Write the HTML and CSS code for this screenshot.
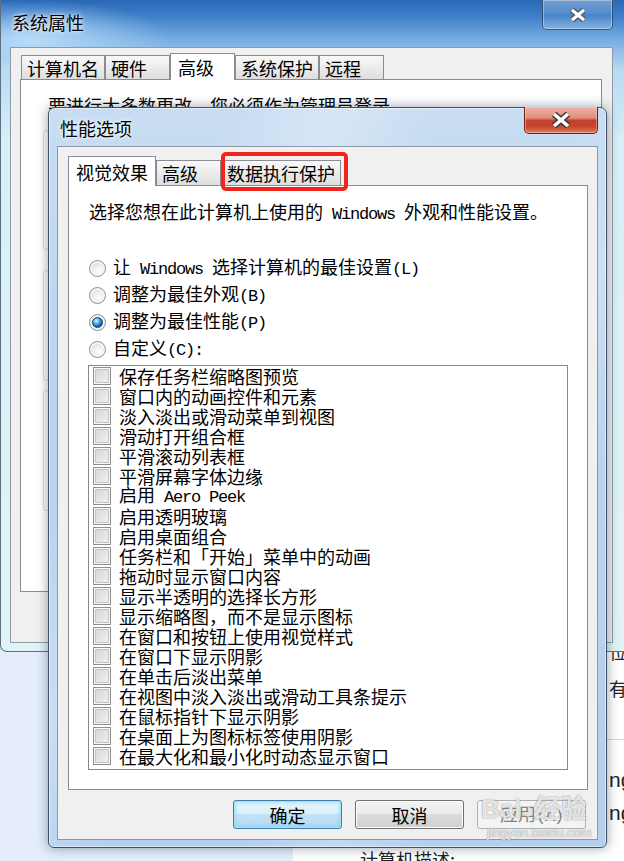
FILE: index.html
```html
<!DOCTYPE html>
<html lang="zh-CN">
<head>
  <meta charset="UTF-8">
  <meta name="viewport" content="width=device-width, initial-scale=1.0">
  <title>性能选项</title>
  <link rel="stylesheet" href="styles.css">
</head>
<body>

  <!-- Web page lying behind the windows -->
  <div class="page">
    <div class="page-line edge">位</div>
    <div class="page-line edge gap1">有可</div>
    <div class="page-rule"></div>
    <div class="page-line edge en gap2">ng</div>
    <div class="page-line edge en gap3">ng</div>
    <div class="page-line desc">计算机描述:</div>
  </div>

  <!-- System properties window (behind) -->
  <div class="window sys">
    <div class="titlebar">
      <span class="title">系统属性</span>
      <div class="close">
        <svg width="22" height="16" viewBox="0 0 22 16">
          <path d="M5 3 L17 13 M17 3 L5 13" stroke="#4a5562" stroke-width="6"/>
          <path d="M5 3 L17 13 M17 3 L5 13" stroke="#fff" stroke-width="3.4"/>
        </svg>
      </div>
    </div>
    <div class="client">
      <div class="tabs">
        <div class="tab">计算机名</div>
        <div class="tab">硬件</div>
        <div class="tab on">高级</div>
        <div class="tab">系统保护</div>
        <div class="tab">远程</div>
      </div>
      <div class="panel sys-panel">
        <p class="note">要进行大多数更改，您必须作为管理员登录。</p>
        <div class="group g1"></div>
        <div class="group g2"></div>
        <div class="group g3"></div>
      </div>
      <div class="sys-foot"></div>
    </div>
  </div>

  <!-- Performance options dialog (front) -->
  <div class="window perf">
    <div class="titlebar">
      <span class="title">性能选项</span>
      <div class="close red">
        <svg width="22" height="16" viewBox="0 0 22 16">
          <path d="M4 2 L18 14 M18 2 L4 14" stroke="#3a3a3a" stroke-width="6.4"/>
          <path d="M4 2 L18 14 M18 2 L4 14" stroke="#fff" stroke-width="3.6"/>
        </svg>
      </div>
    </div>
    <div class="client">
      <div class="tabs">
        <div class="tab on">视觉效果</div>
        <div class="tab">高级</div>
        <div class="tab marked">数据执行保护</div>
      </div>
      <div class="panel">
        <p class="intro">选择您想在此计算机上使用的<span class="lat"> Windows </span>外观和性能设置。</p>

        <div class="radios">
          <label class="radio"><span class="dot"></span><span>让<span class="lat"> Windows </span>选择计算机的最佳设置<span class="lat">(L)</span></span></label>
          <label class="radio"><span class="dot"></span><span>调整为最佳外观<span class="lat">(B)</span></span></label>
          <label class="radio"><span class="dot on"></span><span>调整为最佳性能<span class="lat">(P)</span></span></label>
          <label class="radio"><span class="dot"></span><span>自定义<span class="lat">(C):</span></span></label>
        </div>

        <ul class="list">
          <li><span class="box"></span><span>保存任务栏缩略图预览</span></li>
          <li><span class="box"></span><span>窗口内的动画控件和元素</span></li>
          <li><span class="box"></span><span>淡入淡出或滑动菜单到视图</span></li>
          <li><span class="box"></span><span>滑动打开组合框</span></li>
          <li><span class="box"></span><span>平滑滚动列表框</span></li>
          <li><span class="box"></span><span>平滑屏幕字体边缘</span></li>
          <li><span class="box"></span><span>启用<span class="lat"> Aero Peek</span></span></li>
          <li><span class="box"></span><span>启用透明玻璃</span></li>
          <li><span class="box"></span><span>启用桌面组合</span></li>
          <li><span class="box"></span><span>任务栏和「开始」菜单中的动画</span></li>
          <li><span class="box"></span><span>拖动时显示窗口内容</span></li>
          <li><span class="box"></span><span>显示半透明的选择长方形</span></li>
          <li><span class="box"></span><span>显示缩略图，而不是显示图标</span></li>
          <li><span class="box"></span><span>在窗口和按钮上使用视觉样式</span></li>
          <li><span class="box"></span><span>在窗口下显示阴影</span></li>
          <li><span class="box"></span><span>在单击后淡出菜单</span></li>
          <li><span class="box"></span><span>在视图中淡入淡出或滑动工具条提示</span></li>
          <li><span class="box"></span><span>在鼠标指针下显示阴影</span></li>
          <li><span class="box"></span><span>在桌面上为图标标签使用阴影</span></li>
          <li><span class="box"></span><span>在最大化和最小化时动态显示窗口</span></li>
        </ul>
      </div>
      <div class="buttons">
        <button class="btn default">确定</button>
        <button class="btn">取消</button>
        <button class="btn" disabled>应用<span class="lat">(A)</span></button>
      </div>
    </div>

    <!-- watermark over the corner -->
    <div class="watermark">
      <div class="wm-logo">Bai<span class="paw">◕</span>经验</div>
      <div class="wm-url">jingyan.baidu.com</div>
    </div>
  </div>

</body>
</html>
```

FILE: styles.css
```css
/* Basic page */
body {
  margin: 0;
  width: 624px;
  height: 861px;
  position: relative;
  overflow: hidden;
  background: linear-gradient(90deg, #e4edf9 293px, #ffffff 293px);
  font-family: "Noto Sans CJK SC", "Noto Sans", sans-serif;
  font-size: 18px;
  line-height: 20px;
  color: #000;
}

p {
  margin: 0;
}

/* Latin text inside the CJK dialog font */
.lat {
  font-family: "Liberation Mono", monospace;
  font-size: 17px;
  letter-spacing: -1.2px;
}

/* Page behind the windows */
.page {
  position: absolute;
  left: 293px;
  top: 0;
  right: 0;
  bottom: 0;
  background: #fff;
  padding-top: 641px;
  color: #222;
}

.page-line.edge {
  padding-left: 316px;
  white-space: nowrap;
}

.page-line.gap1 { margin-top: 17px; }
.page-line.gap2 { margin-top: 29px; }
.page-line.gap3 { margin-top: 11px; }

.page-line.en {
  font-family: "Liberation Sans", sans-serif;
  font-size: 21px;
  line-height: 22px;
}

.page-rule {
  margin-top: 41px;
  height: 1px;
  background: #d4d4d4;
}

.page-line.desc {
  margin-top: 25px;
  padding-left: 67px;
}

/* Window frames */
.window {
  position: absolute;
  box-sizing: border-box;
  display: flex;
  flex-direction: column;
}

.titlebar {
  display: flex;
  justify-content: space-between;
  align-items: flex-start;
  flex: none;
}

.title {
  text-shadow: 0 0 6px rgba(255, 255, 255, 0.9), 0 0 3px rgba(255, 255, 255, 0.9);
}

.close {
  display: flex;
  align-items: center;
  justify-content: center;
  box-sizing: border-box;
}

.client {
  flex: 1;
  display: flex;
  flex-direction: column;
  background: #f0f0f0;
  border: 1px solid #8a98a8;
}

/* Outer window: 系统属性 */
.sys {
  left: 0;
  top: 0;
  width: 632px;
  height: 652px;
  z-index: 1;
  padding: 0 18px 8px 9px;
  border: 1px solid #5d6f82;
  border-top: none;
  border-radius: 0 0 7px 7px;
  background:
    radial-gradient(ellipse 140px 40px at 30px 40px, rgba(190, 225, 250, 0.9), transparent),
    linear-gradient(180deg, #2a68b6 0, #3d7fc8 16px, #78ade2 40px, #b7dbf2 70px, #d7eff6 140px, #e1f4f5 100%);
}

.sys .titlebar {
  height: 47px;
}

.sys .title {
  margin: 12px 0 0 2px;
}

.sys .close {
  width: 71px;
  height: 30px;
  border: 1px solid rgba(35, 55, 85, 0.75);
  border-top: none;
  border-radius: 0 0 5px 5px;
  background: linear-gradient(rgba(255, 255, 255, 0.35), rgba(255, 255, 255, 0.12) 50%, rgba(255, 255, 255, 0.05) 50%, rgba(255, 255, 255, 0.25));
  box-shadow: inset 0 0 0 1px rgba(255, 255, 255, 0.35);
}

.sys .client {
  padding: 5px 10px 0 9px;
  border-color: #8f9aa6;
}

.sys .tabs {
  padding-left: 1px;
}

.sys .tab {
  height: 24px;
}

.sys .tab.on {
  height: 27px;
}

.sys-panel {
  padding: 15px 20px 0 22px;
}

.note {
  margin-left: 5px;
  white-space: nowrap;
}

.group {
  border: 1px solid #d5dfe5;
  border-radius: 3px;
  width: 540px;
}

.g1 { margin-top: 15px; height: 118px; }
.g2 { margin-top: 20px; height: 109px; }
.g3 { margin-top: 9px; height: 119px; }

.sys-foot {
  height: 50px;
  flex: none;
}

/* Tabs */
.tabs {
  display: flex;
  align-items: flex-end;
  position: relative;
  z-index: 1;
  flex: none;
}

.tab {
  box-sizing: border-box;
  min-width: 65px;
  height: 25px;
  padding: 0 5px;
  display: flex;
  align-items: center;
  border: 1px solid #898c95;
  border-bottom: none;
  background: linear-gradient(#f8f8f8, #ececec 50%, #dedede);
  white-space: nowrap;
  position: relative;
}

.tab.on {
  height: 30px;
  padding: 0 7px;
  margin-bottom: -1px;
  background: #fff;
}

/* Red annotation around a tab */
.tab.marked::after {
  content: "";
  position: absolute;
  left: -1px;
  right: -8px;
  top: -9px;
  bottom: -6px;
  border: 4px solid #f2241c;
  border-radius: 5px;
}

.panel {
  flex: 1;
  background: #fff;
  border: 1px solid #898c95;
}

/* Inner dialog: 性能选项 */
.perf {
  left: 48px;
  top: 107px;
  width: 559px;
  height: 741px;
  z-index: 2;
  padding: 0 8px 7px 8px;
  border: 1px solid #3f5064;
  border-radius: 7px 7px 6px 6px;
  background:
    linear-gradient(115deg, transparent 20%, rgba(255, 255, 255, 0.28) 32%, transparent 44%, transparent 60%, rgba(255, 255, 255, 0.2) 70%, transparent 80%),
    linear-gradient(180deg, #c8ddf2, #b9d4ef 40%, #b3d0ee);
  box-shadow: 0 0 12px rgba(20, 40, 70, 0.45), inset 0 0 0 1px rgba(255, 255, 255, 0.5);
}

.perf .titlebar {
  height: 38px;
}

.perf .title {
  margin: 10px 0 0 3px;
}

.close.red {
  width: 74px;
  height: 27px;
  margin-top: -1px;
  border: 1px solid #6b2118;
  border-top: none;
  border-radius: 0 0 5px 5px;
  background: linear-gradient(#eeb3a6, #e08d7c 42%, #c6402b 52%, #c8432d 75%, #e27c5f);
  box-shadow: inset 0 0 0 1px rgba(255, 220, 210, 0.45);
}

.perf .client {
  padding: 9px 9px 10px 10px;
}

.perf .panel {
  padding: 0 0 0 20px;
}

.intro {
  margin-top: 15px;
  white-space: nowrap;
}

/* Radio buttons */
.radios {
  margin-top: 33px;
}

.radio {
  display: flex;
  align-items: center;
  gap: 7px;
  height: 20px;
  margin-top: 7px;
  white-space: nowrap;
}

.dot {
  box-sizing: border-box;
  width: 17px;
  height: 17px;
  border-radius: 50%;
  border: 1px solid #8d9094;
  background: radial-gradient(circle at 60% 65%, #ffffff, #ececec 45%, #cfcfcf 80%);
  box-shadow: inset 0 0 0 2px #f6f6f6;
  display: flex;
  align-items: center;
  justify-content: center;
}

.dot.on::after {
  content: "";
  width: 9px;
  height: 9px;
  border-radius: 50%;
  border: 1px solid #163f6b;
  background: radial-gradient(circle at 38% 32%, #d4f4ff, #4fb5ec 35%, #1167b4 65%, #0b3f78);
}

/* Checkbox list */
.list {
  list-style: none;
  box-sizing: border-box;
  width: 480px;
  height: 405px;
  margin: 6px 0 0 -1px;
  padding: 0;
  border: 1px solid #828790;
  overflow: hidden;
}

.list li {
  display: flex;
  align-items: center;
  gap: 8px;
  height: 20px;
  padding-left: 4px;
  white-space: nowrap;
}

.box {
  box-sizing: border-box;
  width: 18px;
  height: 18px;
  flex: none;
  border: 1px solid #8e8f8f;
  background: linear-gradient(135deg, #d3d3d3, #f4f4f4);
  box-shadow: inset 0 0 0 1px #f7f7f7, inset 0 0 0 2px #c4c4c4;
}

/* Dialog buttons */
.buttons {
  display: flex;
  justify-content: flex-end;
  gap: 13px;
  margin-top: 10px;
  padding-right: 2px;
  flex: none;
}

.btn {
  width: 109px;
  height: 29px;
  padding: 0;
  font-family: inherit;
  font-size: 18px;
  line-height: 20px;
  color: #000;
  border: 1px solid #707070;
  border-radius: 3px;
  background: linear-gradient(#f2f2f2, #ebebeb 50%, #dddddd 50%, #cfcfcf);
  box-shadow: inset 0 0 0 1px #fcfcfc;
}

.btn.default {
  border-color: #3c7fb1;
  background: linear-gradient(#e8f5fc, #d9eefa 50%, #c3e3f6 50%, #b0d8f0);
  box-shadow: inset 0 0 0 1px #a6e2fa, inset 0 0 3px 2px rgba(110, 205, 245, 0.45);
}

.btn:disabled {
  border-color: #adb2b5;
  background: #f4f4f4;
  color: #838383;
  box-shadow: none;
}

/* Watermark */
.watermark {
  position: absolute;
  left: 432px;
  top: 686px;
  color: rgba(255, 255, 255, 0.8);
  text-shadow: 0 0 1px rgba(90, 90, 90, 0.6), 0 0 2px rgba(90, 90, 90, 0.35);
  pointer-events: none;
}

.wm-logo {
  font-family: "Liberation Sans", "Noto Sans CJK SC", sans-serif;
  font-weight: bold;
  font-size: 26px;
  line-height: 30px;
  white-space: nowrap;
}

.paw {
  font-size: 22px;
}

.wm-url {
  font-family: "Liberation Sans", sans-serif;
  font-size: 13px;
  line-height: 14px;
  margin-left: 6px;
}
```
